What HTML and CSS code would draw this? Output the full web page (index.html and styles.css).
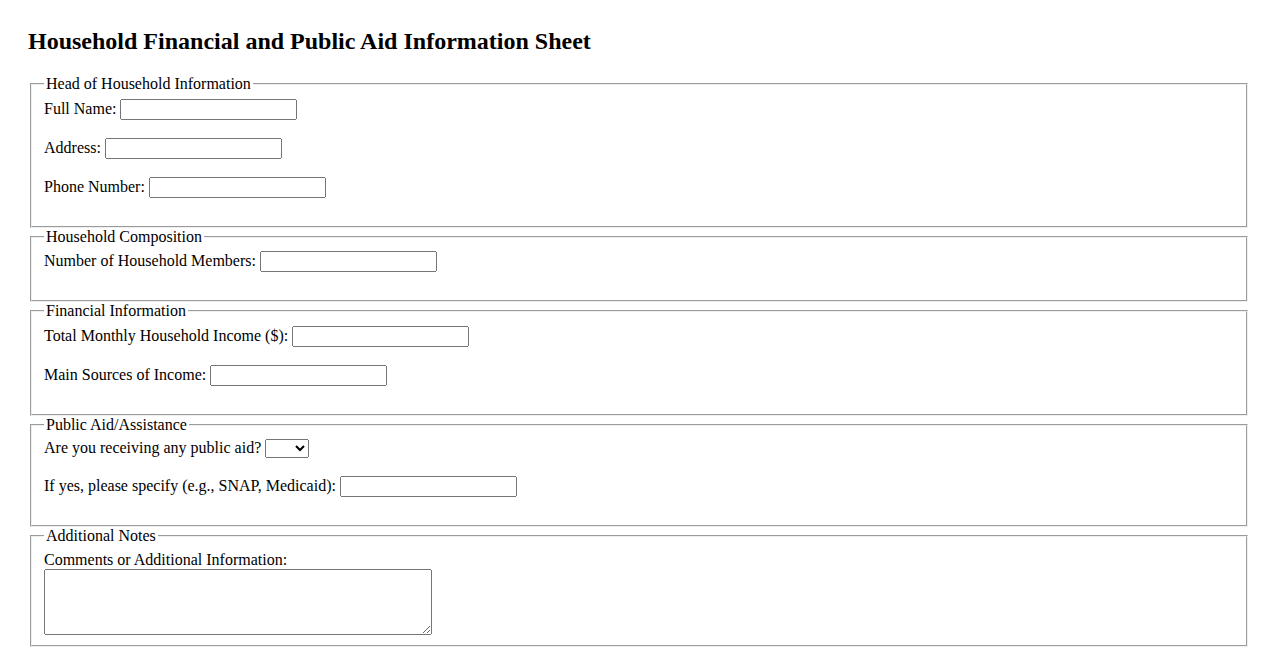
FILE: index.html
```html
<!DOCTYPE html>
<html>
<head>
<meta charset="utf-8">
<title>Household Financial and Public Aid Information Sheet</title>
<link rel="stylesheet" href="styles.css">
</head>
<body>
<h1 class="title">Household Financial and Public Aid Information Sheet</h1>
<form class="sheet">
  <fieldset class="group">
    <legend>Head of Household Information</legend>
    <label for="name">Full Name:</label> <input class="field" type="text" id="name"><br><br>
    <label for="address">Address:</label> <input class="field" type="text" id="address"><br><br>
    <label for="phone">Phone Number:</label> <input class="field" type="text" id="phone"><br><br>
  </fieldset>
  <fieldset class="group">
    <legend>Household Composition</legend>
    <label for="members">Number of Household Members:</label> <input class="field" type="text" id="members"><br><br>
  </fieldset>
  <fieldset class="group">
    <legend>Financial Information</legend>
    <label for="income">Total Monthly Household Income ($):</label> <input class="field" type="text" id="income"><br><br>
    <label for="sources">Main Sources of Income:</label> <input class="field" type="text" id="sources"><br><br>
  </fieldset>
  <fieldset class="group">
    <legend>Public Aid/Assistance</legend>
    <label for="aid">Are you receiving any public aid?</label> <select class="choice" id="aid"><option></option><option>Yes</option><option>No</option></select><br><br>
    <label for="aidtype">If yes, please specify (e.g., SNAP, Medicaid):</label> <input class="field" type="text" id="aidtype"><br><br>
  </fieldset>
  <fieldset class="group">
    <legend>Additional Notes</legend>
    <label for="notes">Comments or Additional Information:</label><br>
    <textarea class="notes" id="notes"></textarea>
  </fieldset>
</form>
</body>
</html>
```
FILE: styles.css
```css
body {
  margin: 8px;
  padding: 20px;
  font-family: "Liberation Serif", "Times New Roman", serif;
  font-size: 16px;
  color: #000;
  background: #fff;
}
.title {
  font-size: 24px;
  margin: 0 0 20px 0;
}
.group {
  margin: 0 2px;
}
.field {
  width: 177px;
  height: 21px;
  box-sizing: border-box;
}
.choice {
  width: 44px;
  height: 19px;
  box-sizing: border-box;
}
.notes {
  display: block;
  width: 388px;
  height: 66px;
  box-sizing: border-box;
}
```
